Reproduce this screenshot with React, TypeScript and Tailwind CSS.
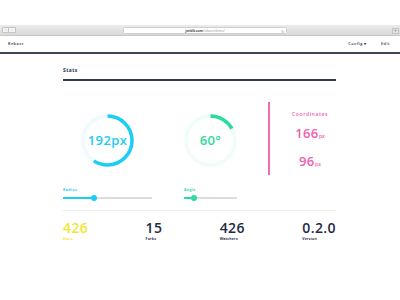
import React from "react";

const font = { fontFamily: '"Open Sans", "Liberation Sans", sans-serif' };

function Ring({ color, bg, frac, label }: { color: string; bg: string; frac: number; label: React.ReactNode }) {
  const r = 24.5;
  const c = 2 * Math.PI * r;
  return (
    <div className="relative w-[53px] h-[53px] shrink-0">
      <svg width="53" height="53" viewBox="0 0 53 53" className="block">
        <circle cx="26.5" cy="26.5" r={r} fill="none" stroke={bg} strokeWidth="3.5" />
        <circle
          cx="26.5"
          cy="26.5"
          r={r}
          fill="none"
          stroke={color}
          strokeWidth="3.5"
          strokeDasharray={`${c * frac} ${c}`}
          transform="rotate(-90 26.5 26.5)"
        />
      </svg>
      <div className="absolute inset-0 flex items-center justify-center">{label}</div>
    </div>
  );
}

function Slider({ color, frac, label, width }: { color: string; frac: number; label: string; width: number }) {
  return (
    <div style={{ width }} className="flex flex-col shrink-0">
      <div className="text-[3.5px] leading-[5px] font-bold tracking-[0.4px]" style={{ color }}>{label}</div>
      <div className="relative h-[6px] mt-[3px]">
        <div className="absolute left-0 right-0 top-[2.25px] h-[1.5px] bg-[#dcdcdc]" />
        <div className="absolute left-0 top-[2.25px] h-[1.5px]" style={{ width: `${frac * 100}%`, background: color }} />
        <div
          className="absolute top-0 w-[6px] h-[6px] rounded-full"
          style={{ left: `calc(${frac * 100}% - 3px)`, background: color }}
        />
      </div>
    </div>
  );
}

function Stat({ value, label, color, labelColor }: { value: string; label: string; color: string; labelColor: string }) {
  return (
    <div className="flex flex-col">
      <div className="text-[14px] leading-[14px] font-semibold tracking-[0.4px]" style={{ color }}>{value}</div>
      <div className="text-[3.5px] leading-[4px] font-bold mt-[1.5px] tracking-[0.2px]" style={{ color: labelColor }}>{label}</div>
    </div>
  );
}

export default function App() {
  return (
    <div className="w-[400px] h-[300px] bg-white overflow-hidden" style={font}>
      <div className="h-[25px]" />
      {/* browser chrome */}
      <div className="h-[11px] bg-gradient-to-b from-[#ececec] to-[#d9d9d9] border-b border-[#c8c8c8] flex items-center relative">
        <div className="ml-[2px] flex">
          <div className="w-[7px] h-[6px] border border-[#c4c4c4] bg-[#f4f4f4] rounded-l-[1px] text-[4px] leading-[4px] text-[#777] flex items-center justify-center">‹</div>
          <div className="w-[7px] h-[6px] border border-l-0 border-[#c4c4c4] bg-[#f4f4f4] rounded-r-[1px] text-[4px] leading-[4px] text-[#bbb] flex items-center justify-center">›</div>
        </div>
        <div className="absolute left-[123px] top-[2px] w-[164px] h-[7px] bg-white border border-[#cfcfcf] rounded-[1.5px] flex items-center justify-center">
          <span className="text-[3.2px] leading-[4px] text-[#444] font-bold">jxnblk.com</span>
          <span className="text-[3.2px] leading-[4px] text-[#999]">/rebass/demo/</span>
          <span className="absolute right-[2px] top-[0.5px] text-[4px] leading-[5px] text-[#999]">↻</span>
        </div>
        <div className="absolute right-[1px] top-[3px] w-[7px] h-[6px] border border-[#c4c4c4] bg-[#e4e4e4] text-[5px] leading-[5px] text-[#888] flex items-center justify-center">+</div>
      </div>
      {/* nav */}
      <div className="h-[18px] border-b-2 border-[#3b4658] flex items-center px-[8px] text-[3.8px] font-semibold tracking-[0.5px] text-[#2a3446]">
        <span>Rebass</span>
        <span className="ml-auto">Config ▾</span>
        <span className="ml-[14px] mr-[2px]">Edit</span>
      </div>
      {/* main */}
      <div className="ml-[63px] w-[273px]">
        <div className="mt-[13px] pb-[6px] border-b-2 border-[#2f3a4b] text-[5px] leading-[6px] font-bold tracking-[0.4px] text-[#2a3446]">
          Stats
        </div>
        <div className="mt-[21px] flex h-[73px]">
          <div className="w-[89px] shrink-0 flex justify-center pt-[12px]">
            <Ring
              color="#1ccdf4"
              bg="#eefbfe"
              frac={0.59}
              label={<span className="text-[13px] font-semibold text-[#1ccdf4] tracking-[0.4px]">192px</span>}
            />
          </div>
          <div className="ml-[32px] w-[53px] shrink-0 flex justify-center pt-[12px]">
            <Ring
              color="#2cdc9b"
              bg="#eefdf7"
              frac={0.168}
              label={<span className="text-[13px] font-semibold text-[#2cdc9b] tracking-[0.4px]">60°</span>}
            />
          </div>
          <div className="ml-[31px] w-[82px] shrink-0 border-l-2 border-[#f06bb6] flex flex-col items-center text-[#ee5fb0]">
            <div className="mt-[9px] text-[5.2px] leading-[6px] font-semibold tracking-[0.5px]">Coordinates</div>
            <div className="mt-[10px] flex items-baseline">
              <span className="text-[13px] leading-[13px] font-semibold tracking-[0.3px]">166</span>
              <span className="text-[5px] font-semibold ml-[0.5px]">px</span>
            </div>
            <div className="mt-[14px] flex items-baseline">
              <span className="text-[13px] leading-[13px] font-semibold tracking-[0.3px]">96</span>
              <span className="text-[5px] font-semibold ml-[0.5px]">px</span>
            </div>
          </div>
        </div>
        <div className="mt-[12px] flex h-[14px]">
          <Slider color="#1ccdf4" frac={0.35} label="Radius" width={89} />
          <div className="ml-[32px] shrink-0">
            <Slider color="#2cdc9b" frac={0.19} label="Angle" width={53} />
          </div>
        </div>
        <div className="mt-[9px] h-px bg-[#ececec]" />
        <div className="mt-[10px] flex justify-between">
          <Stat value="426" label="Stars" color="#f3e630" labelColor="#f3e630" />
          <Stat value="15" label="Forks" color="#1f2a44" labelColor="#1f2a44" />
          <Stat value="426" label="Watchers" color="#1f2a44" labelColor="#1f2a44" />
          <Stat value="0.2.0" label="Version" color="#1f2a44" labelColor="#1f2a44" />
        </div>
      </div>
    </div>
  );
}
